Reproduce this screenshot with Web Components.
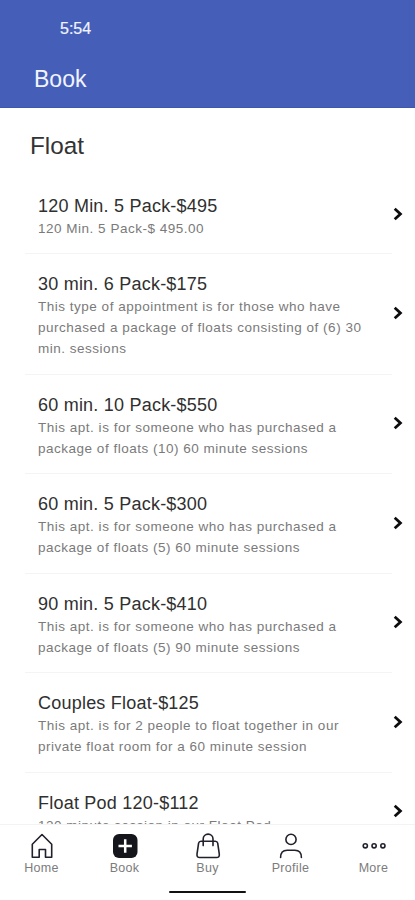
<!DOCTYPE html>
<html lang="en">
<head>
<meta charset="utf-8">
<title>Book</title>
<style>
  body {
    margin: 0;
    font-family: "Liberation Sans", Arial, sans-serif;
    background: #fff;
  }
</style>
</head>
<body>
<book-app>
  <app-header slot="header" time="5:54">Book</app-header>
  <pack-row name="120 Min. 5 Pack-$495">120 Min. 5 Pack-$ 495.00</pack-row>
  <pack-row name="30 min. 6 Pack-$175">This type of appointment is for those who have<br>purchased a package of floats consisting of (6) 30<br>min. sessions</pack-row>
  <pack-row name="60 min. 10 Pack-$550">This apt. is for someone who has purchased a<br>package of floats (10) 60 minute sessions</pack-row>
  <pack-row name="60 min. 5 Pack-$300">This apt. is for someone who has purchased a<br>package of floats (5) 60 minute sessions</pack-row>
  <pack-row name="90 min. 5 Pack-$410">This apt. is for someone who has purchased a<br>package of floats (5) 90 minute sessions</pack-row>
  <pack-row name="Couples Float-$125">This apt. is for 2 people to float together in our<br>private float room for a 60 minute session</pack-row>
  <pack-row class="last" name="Float Pod 120-$112">120 minute session in our Float Pod</pack-row>
  <tab-bar slot="tabs">
    <tab-item icon="home">Home</tab-item>
    <tab-item icon="book">Book</tab-item>
    <tab-item icon="buy">Buy</tab-item>
    <tab-item icon="profile">Profile</tab-item>
    <tab-item icon="more">More</tab-item>
  </tab-bar>
</book-app>

<script>
const icons = {
  home: `<path d="M4.3 25.2V12.3L14 2.5l9.7 9.8v12.900h-6.200v-7.700h-6.300v7.700z"/>`,
  book: `<rect x="2" y="2" width="24.500" height="24" rx="6" fill="#15161c" stroke="none"/><path stroke="#fff" stroke-width="2.500" stroke-linecap="butt" d="M14.200 7.300v13.400M7.500 14h13.400"/>`,
  buy: `<path d="M7 9.200h14.300q2 0 2.400 2l1.600 11q.3 3.300-2.800 3.300H5.800q-3.100 0-2.800-3.300l1.600-11q.4-2 2.400-2z"/><path d="M9.200 13.600V7a4.900 4.900 0 0 1 9.800 0v6.600"/>`,
  profile: `<circle cx="14" cy="7.400" r="5.100"/><path d="M3.600 25.500c0-4.500 2.400-7.200 6.600-7.200h7.600c4.200 0 6.600 2.700 6.600 7.200"/>`,
  more: `<circle cx="5.300" cy="13.800" r="2.100"/><circle cx="14.100" cy="13.800" r="2.100"/><circle cx="22.900" cy="13.800" r="2.100"/>`
}

class BookApp extends HTMLElement{
    constructor(){
        super()
        this._shadowDom = this.attachShadow({mode: 'open'})
        this._shadowDom.innerHTML = `
        <style>
        :host{
            display: flex;
            flex-direction: column;
            height: 900px;
            max-height: 100vh;
            overflow: hidden;
        }
        main{
            flex: 1;
            min-height: 0;
            overflow: hidden;
        }
        h1{
            margin: 0;
            padding: 22px 30px 13.4px;
            font-size: 24.3px;
            line-height: 32px;
            font-weight: 400;
            color: #333;
        }
        .list{
            padding: 0 23px 0 25px;
        }
        </style>
        <slot name="header"></slot>
        <main>
            <h1>Float</h1>
            <div class="list"><slot></slot></div>
        </main>
        <slot name="tabs"></slot>
        `
    }
}
window.customElements.define("book-app", BookApp)

class AppHeader extends HTMLElement{
    constructor(){
        super()
        this._shadowDom = this.attachShadow({mode: 'open'})
        this.time = this.getAttribute("time")
        this._shadowDom.innerHTML = `
        <style>
        :host{
            display: block;
            box-sizing: border-box;
            flex: none;
            height: 108px;
            background: #455fb9;
            border-bottom: 1px solid #3e57ae;
            color: #f1f4ff;
        }
        .time{
            padding: 19px 0 0 60px;
            font-size: 16px;
            line-height: 20px;
            -webkit-text-stroke: 0.2px;
        }
        .title{
            padding: 25px 0 0 34px;
            font-size: 23px;
            line-height: 30px;
        }
        </style>
        <div class="time">${this.time}</div>
        <div class="title"><slot></slot></div>
        `
    }
}
window.customElements.define("app-header", AppHeader)

class PackRow extends HTMLElement{
    constructor(){
        super()
        this._shadowDom = this.attachShadow({mode: 'open'})
        this.name = this.getAttribute("name")
        this._shadowDom.innerHTML = `
        <style>
        :host{
            display: flex;
            align-items: center;
            padding: 17.2px 0 13.8px 13px;
            border-bottom: 1px solid #f4f4f4;
        }
        :host(.last){
            padding-bottom: 12px;
        }
        .text{
            flex: 1;
            white-space: nowrap;
        }
        .name{
            font-size: 18px;
            line-height: 26px;
            letter-spacing: 0.22px;
            color: #303030;
        }
        .desc{
            font-size: 13.5px;
            line-height: 20.8px;
            letter-spacing: 0.51px;
            color: #7a7a7a;
        }
        svg{
            flex: none;
            width: 10px;
            height: 14px;
            margin: 0 -11px 4.600px 0;
        }
        </style>
        <div class="text">
            <div class="name">${this.name}</div>
            <div class="desc"><slot></slot></div>
        </div>
        <svg viewBox="0 0 10 14" fill="none" stroke="#0c0c0c" stroke-width="2.800"><path d="M1.700 1.800L7.400 7l-5.700 5.200"/></svg>
        `
    }
}
window.customElements.define("pack-row", PackRow)

class TabBar extends HTMLElement{
    constructor(){
        super()
        this._shadowDom = this.attachShadow({mode: 'open'})
        this._shadowDom.innerHTML = `
        <style>
        :host{
            display: block;
            box-sizing: border-box;
            flex: none;
            height: 76px;
            background: #fff;
            border-top: 1px solid #f3f3f3;
        }
        .tabs{
            display: grid;
            grid-template-columns: repeat(5, 1fr);
            padding-top: 7px;
        }
        .handle{
            width: 77px;
            height: 2px;
            margin: 15px auto 0;
            border-radius: 1px;
            background: #111;
        }
        </style>
        <div class="tabs"><slot></slot></div>
        <div class="handle"></div>
        `
    }
}
window.customElements.define("tab-bar", TabBar)

class TabItem extends HTMLElement{
    constructor(){
        super()
        this._shadowDom = this.attachShadow({mode: 'open'})
        this.icon = this.getAttribute("icon")
        this._shadowDom.innerHTML = `
        <style>
        :host{
            display: flex;
            flex-direction: column;
            align-items: center;
            font-size: 12.5px;
            line-height: 16px;
            letter-spacing: 0.3px;
            color: #7c7c7c;
        }
        svg{
            width: 28px;
            height: 28px;
        }
        </style>
        <svg viewBox="0 0 28 28" fill="none" stroke="#20212c" stroke-width="1.600" stroke-linejoin="round" stroke-linecap="round">${icons[this.icon]}</svg>
        <span><slot></slot></span>
        `
    }
}
window.customElements.define("tab-item", TabItem)
</script>
</body>
</html>
